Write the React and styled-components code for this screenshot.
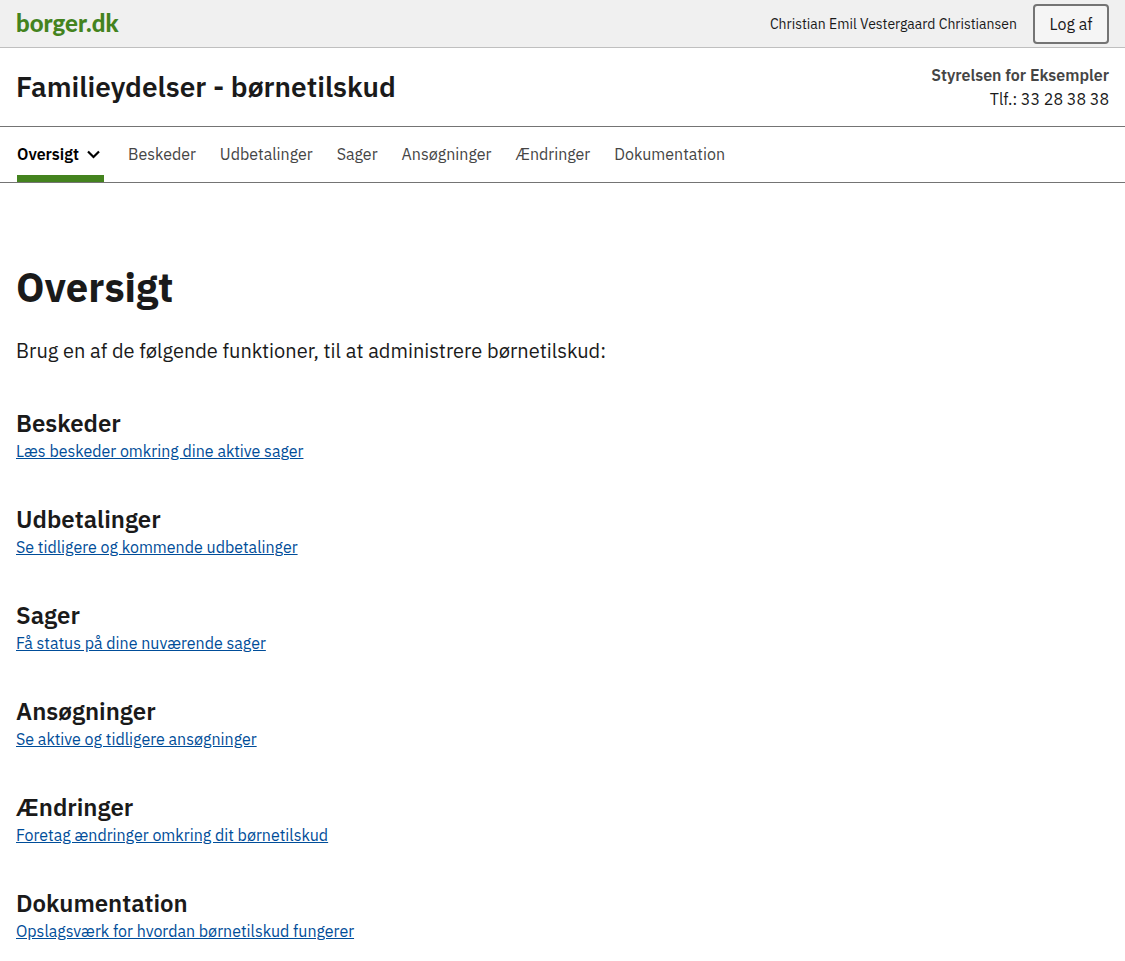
import React from "react";
import styled, { createGlobalStyle } from "styled-components";

const GlobalStyle = createGlobalStyle`
  *, *::before, *::after { box-sizing: border-box; }
  body {
    margin: 0;
    background: #ffffff;
    color: #1a1a1a;
    font-family: "IBM Plex Sans", "Noto Sans", sans-serif;
    font-size: 16px;
    line-height: 24px;
  }
  h1, h2, p { margin: 0; }
`;

const PortalBar = styled.div`
  display: flex;
  align-items: center;
  justify-content: space-between;
  height: 48px;
  padding: 0 16px;
  background: #f0f0f0;
  border-bottom: 1px solid #bfbfbf;
`;

const Logo = styled.a`
  padding-bottom: 2px;
  color: #44831e;
  font-family: Lato, sans-serif;
  font-size: 24px;
  font-weight: 900;
  line-height: 32px;
  text-decoration: none;
`;

const Session = styled.div`
  display: flex;
  align-items: center;
  gap: 16px;
`;

const UserName = styled.span`
  font-size: 14px;
`;

const LogoutButton = styled.button`
  min-width: 76px;
  height: 40px;
  padding: 0 12px;
  border: 2px solid #747474;
  border-radius: 4px;
  background: #f5f5f5;
  color: #1a1a1a;
  font: inherit;
  cursor: pointer;
`;

const SolutionBar = styled.div`
  display: flex;
  align-items: center;
  justify-content: space-between;
  min-height: 78px;
  padding: 0 16px;
`;

const SolutionTitle = styled.p`
  font-size: 28px;
  font-weight: 600;
  line-height: 36px;
`;

const Authority = styled.div`
  text-align: right;
`;

const AuthorityName = styled.p`
  color: #454545;
  font-weight: 600;
`;

const Nav = styled.nav`
  border-top: 1px solid #747474;
  border-bottom: 1px solid #747474;
  padding: 0 17px;
`;

const NavList = styled.ul`
  display: flex;
  gap: 24px;
  margin: 0;
  padding: 0;
  list-style: none;
`;

const NavLink = styled.a`
  display: flex;
  align-items: center;
  gap: 8px;
  height: 55px;
  padding: ${(p) => (p.$current ? "6px 4px 0 0" : "0 0 1px")};
  border-bottom: ${(p) => (p.$current ? "7px solid #44831e" : "0")};
  color: ${(p) => (p.$current ? "#000000" : "#454545")};
  font-weight: ${(p) => (p.$current ? 600 : 400)};
  text-decoration: none;
`;

const Main = styled.main`
  padding: 80px 16px 16px;
`;

const PageTitle = styled.h1`
  font-size: 40px;
  font-weight: 700;
  line-height: 48px;
`;

const Lead = styled.p`
  margin-top: 24px;
  font-size: 20px;
  line-height: 32px;
`;

const Topic = styled.section`
  margin-top: 40px;
`;

const TopicTitle = styled.h2`
  font-size: 24px;
  font-weight: 600;
  line-height: 32px;
`;

const TopicLink = styled.a`
  display: inline-block;
  color: #004d99;
  text-decoration: underline;
`;

const Chevron = () => (
  <svg width="13" height="9" viewBox="0 0 13 9" fill="none" aria-hidden="true">
    <path d="M1 1.5 6.5 7 12 1.5" stroke="currentColor" strokeWidth="2.2" />
  </svg>
);

const pages = ["Beskeder", "Udbetalinger", "Sager", "Ansøgninger", "Ændringer", "Dokumentation"];

const linkTexts = [
  "Læs beskeder omkring dine aktive sager",
  "Se tidligere og kommende udbetalinger",
  "Få status på dine nuværende sager",
  "Se aktive og tidligere ansøgninger",
  "Foretag ændringer omkring dit børnetilskud",
  "Opslagsværk for hvordan børnetilskud fungerer",
];

export default function App() {
  return (
    <>
      <GlobalStyle />
      <header>
        <PortalBar>
          <Logo href="#">borger.dk</Logo>
          <Session>
            <UserName>Christian Emil Vestergaard Christiansen</UserName>
            <LogoutButton type="button">Log af</LogoutButton>
          </Session>
        </PortalBar>
        <SolutionBar>
          <SolutionTitle>Familieydelser - børnetilskud</SolutionTitle>
          <Authority>
            <AuthorityName>Styrelsen for Eksempler</AuthorityName>
            <p>Tlf.: 33 28 38 38</p>
          </Authority>
        </SolutionBar>
        <Nav aria-label="Hovedmenu">
          <NavList>
            <li>
              <NavLink href="#" $current aria-current="page">
                Oversigt
                <Chevron />
              </NavLink>
            </li>
            {pages.map((page) => (
              <li key={page}>
                <NavLink href="#">{page}</NavLink>
              </li>
            ))}
          </NavList>
        </Nav>
      </header>
      <Main>
        <PageTitle>Oversigt</PageTitle>
        <Lead>Brug en af de følgende funktioner, til at administrere børnetilskud:</Lead>
        {pages.map((page, i) => (
          <Topic key={page}>
            <TopicTitle>{page}</TopicTitle>
            <TopicLink href="#">{linkTexts[i]}</TopicLink>
          </Topic>
        ))}
      </Main>
    </>
  );
}
